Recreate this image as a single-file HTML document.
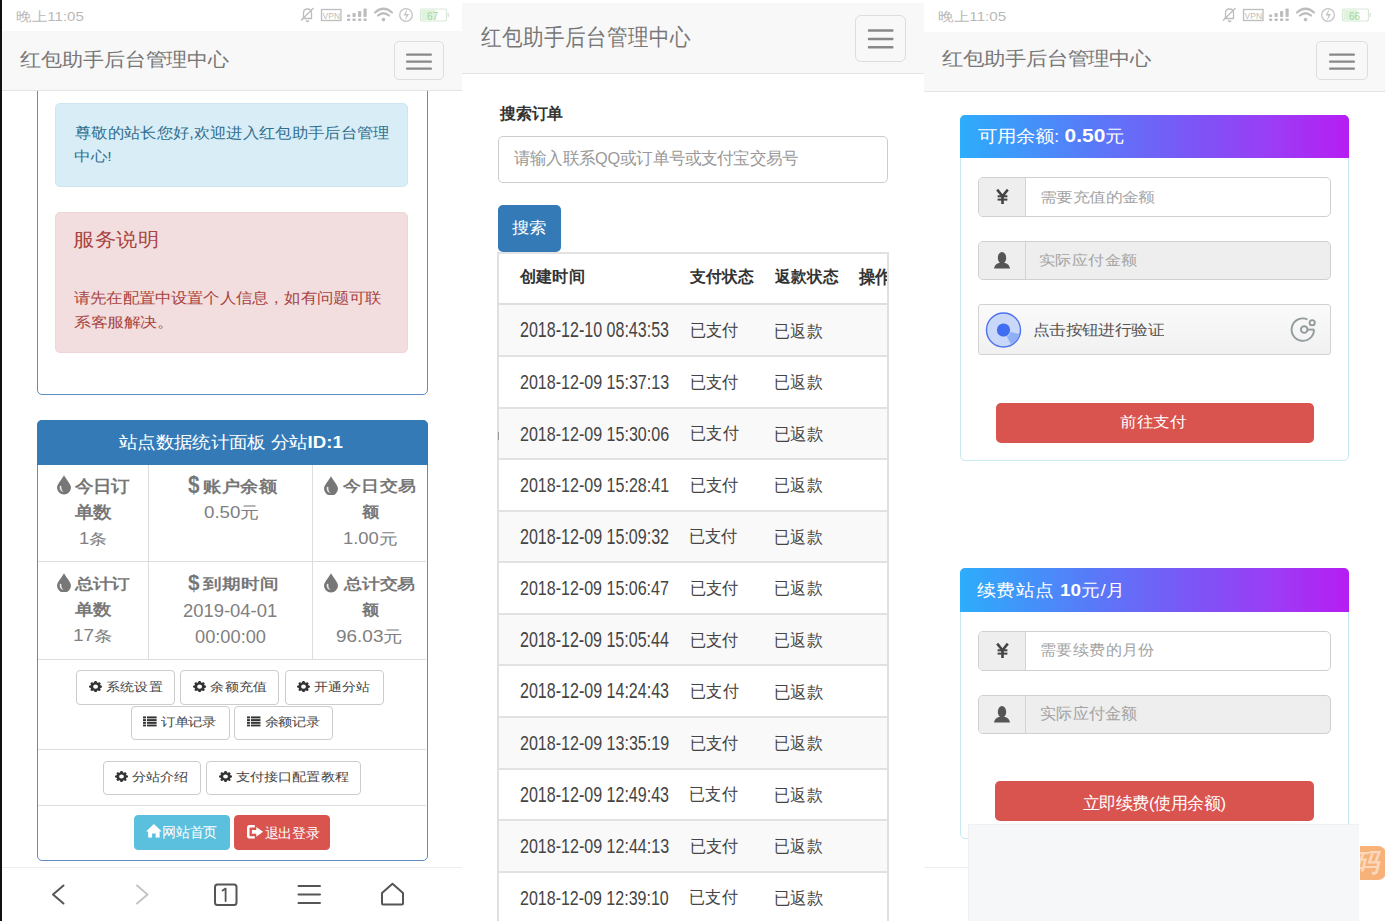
<!DOCTYPE html>
<html><head><meta charset="utf-8">
<style>
*{box-sizing:border-box;margin:0;padding:0}
html,body{width:1385px;height:921px;overflow:hidden;background:#fff;font-family:"Liberation Sans",sans-serif}
.p{position:absolute;top:0;height:921px;overflow:hidden;background:#fff}
.a{position:absolute}
.t{position:absolute;white-space:nowrap;line-height:1}
.nav{position:absolute;left:0;width:100%;background:#f8f8f8;border-bottom:1px solid #e4e4e4}
.tog{position:absolute;border:1px solid #ddd;border-radius:5px}
.bar{position:absolute;height:2.3px;background:#888;border-radius:1px}
.btn{position:absolute;border:1px solid #ccc;border-radius:4px;background:#fff}
</style></head><body>
<div class="p" id="L" style="left:0;width:462px">
<div class="a" style="left:0;top:0;width:1.5px;height:921px;background:#111"></div>
<div class="a" style="left:36.5px;top:60px;width:391px;height:335px;border:1.5px solid #5f8cc2;border-radius:5px"></div>
<div class="a" style="left:55px;top:103px;width:353px;height:84px;background:#d9edf7;border:1px solid #cfe6f2;border-radius:5px"></div>
<div class="t" id="L_info1" style="left:74.50px;top:125.90px;font-size:16.50px;color:#31708f;font-weight:normal;transform:scale(0.9604,0.8811);transform-origin:0 0;">尊敬的站长您好,欢迎进入红包助手后台管理</div>
<div class="t" id="L_info2" style="left:74.10px;top:149.40px;font-size:16.50px;color:#31708f;font-weight:normal;transform:scale(0.9790,0.8236);transform-origin:0 0;">中心!</div>
<div class="a" style="left:55px;top:212px;width:353px;height:141px;background:#f2dede;border:1px solid #eed5d8;border-radius:5px"></div>
<div class="t" id="L_dT" style="left:73.30px;top:230.30px;font-size:20.80px;color:#a94442;font-weight:normal;transform:scale(1.0262,0.9200);transform-origin:0 0;">服务说明</div>
<div class="t" id="L_d1" style="left:74.00px;top:290.40px;font-size:16.30px;color:#a94442;font-weight:normal;transform:scale(1.0115,0.9242);transform-origin:0 0;">请先在配置中设置个人信息，如有问题可联</div>
<div class="t" id="L_d2" style="left:74.00px;top:314.90px;font-size:16.30px;color:#a94442;font-weight:normal;transform:scale(1.0314,0.8460);transform-origin:0 0;">系客服解决。</div>
<div class="a" style="left:1.5px;top:0;width:461px;height:31px;background:#fff"></div>
<div class="t" id="L_sb" style="left:15.60px;top:10.10px;font-size:14.50px;color:#b9b9b9;font-weight:normal;transform:scale(1.0411,0.8760);transform-origin:0 0;">晚上11:05</div>
<svg class="a" style="left:290px;top:0" width="165" height="31" viewBox="290 0 165 31">
  <g fill="none" stroke="#bdbdbd" stroke-width="1.3">
    <path d="M303.5 18.5 V13 Q303.5 9 307.5 9 Q311.5 9 311.5 13 V18.5 H302 M301 20.5 L313.5 8"/>
    <path d="M306 20.5 Q307.5 22.5 309 20.5"/>
    <rect x="321.5" y="9.5" width="19.5" height="11" />
  </g>
  <text x="322.6" y="18.6" font-size="9" fill="#bdbdbd" style="font-family:'Liberation Sans',sans-serif" textLength="17.5" lengthAdjust="spacingAndGlyphs">VPN</text>
  <g fill="#bdbdbd">
    <rect x="347" y="14.5" width="3.2" height="2.6" rx=".8"/><rect x="352.5" y="13" width="3.2" height="4" rx=".8"/><rect x="358" y="11" width="3.2" height="6" rx=".8"/><rect x="363.5" y="8.5" width="3.2" height="8.6" rx=".8"/>
    <rect x="347" y="18.5" width="3.2" height="2.6" rx=".8"/><rect x="352.5" y="18.5" width="3.2" height="2.6" rx=".8"/><rect x="358" y="18.5" width="3.2" height="2.6" rx=".8"/><rect x="363.5" y="18.5" width="3.2" height="2.6" rx=".8"/>
  </g>
  <g fill="none" stroke="#bdbdbd" stroke-width="2.2" stroke-linecap="round">
    <path d="M375 12.5 Q383.5 5 392 12.5"/><path d="M378 15.5 Q383.5 11 389 15.5"/>
  </g>
  <circle cx="383.5" cy="19.6" r="1.8" fill="#bdbdbd"/>
  <circle cx="406" cy="15" r="6.3" fill="none" stroke="#c4c4c4" stroke-width="1.3"/>
  <path d="M407.5 8.5 L403.5 15.5 H406.5 L404.5 21.5 L409 14 H406 Z" fill="#c4c4c4"/>
  <rect x="420.5" y="9" width="26" height="12" rx="2" fill="none" stroke="#d7e9d7" stroke-width="1.2"/>
  <rect x="421.5" y="10" width="14" height="10" fill="#dff3df"/>
  <rect x="447.5" y="13" width="1.5" height="4" fill="#e3e3e3"/>
  <text x="427" y="19.5" font-size="10" fill="#9fd69f" style="font-family:'Liberation Sans',sans-serif">67</text>
</svg>
<div class="nav" style="top:31px;height:60px;left:1.5px"></div>
<div class="t" id="L_title" style="left:19.55px;top:49.75px;font-size:21.00px;color:#777;font-weight:normal;transform:scale(0.9965,0.8975);transform-origin:0 0;">红包助手后台管理中心</div>
<div class="tog" style="left:394px;top:41px;width:50px;height:39px"></div>
<svg class="a" style="left:0;top:0" width="462" height="100"><rect x="406" y="53.6" width="26" height="2.2" rx="1" fill="#888"/></svg>
<svg class="a" style="left:0;top:0" width="462" height="100"><rect x="406" y="60.6" width="26" height="2.2" rx="1" fill="#888"/></svg>
<svg class="a" style="left:0;top:0" width="462" height="100"><rect x="406" y="67.6" width="26" height="2.2" rx="1" fill="#888"/></svg>
<div class="a" style="left:36.5px;top:420px;width:391px;height:441px;border:1.5px solid #5f8cc2;border-radius:5px"></div><div class="a" style="left:36.5px;top:420px;width:391px;height:45px;background:#337ab7;border-radius:5px 5px 0 0"></div>
<div class="t" id="L_sh" style="left:119.10px;top:433.90px;font-size:18.30px;color:#fff;font-weight:normal;transform:scale(1.0188,0.9300);transform-origin:0 0;">站点数据统计面板 分站<b>ID:1</b></div>
<div class="a" style="left:38px;top:561px;width:388px;height:1px;background:#ddd"></div>
<div class="a" style="left:38px;top:659px;width:388px;height:1px;background:#ddd"></div>
<div class="a" style="left:38px;top:749px;width:388px;height:1px;background:#ddd"></div>
<div class="a" style="left:38px;top:804.5px;width:388px;height:1px;background:#ddd"></div>
<div class="a" style="left:148px;top:465px;width:1px;height:195px;background:#ddd"></div>
<div class="a" style="left:312px;top:465px;width:1px;height:195px;background:#ddd"></div>
<svg class="a" style="left:57px;top:475.3px" width="14" height="19.5" viewBox="0 0 14 19.5"><path d="M7 0 C6.2 2.8 0 8.8 0 12.6 A7 6.9 0 0 0 14 12.6 C14 8.8 7.8 2.8 7 0Z" fill="#777"/><path d="M2.9 10.8 C2.2 14 3.6 16.6 6.8 17.2 C4.8 15.6 4.1 13.6 4.4 11 Z" fill="#fff" opacity=".85"/></svg>
<svg class="a" style="left:324.4px;top:475.5px" width="14" height="19.5" viewBox="0 0 14 19.5"><path d="M7 0 C6.2 2.8 0 8.8 0 12.6 A7 6.9 0 0 0 14 12.6 C14 8.8 7.8 2.8 7 0Z" fill="#777"/><path d="M2.9 10.8 C2.2 14 3.6 16.6 6.8 17.2 C4.8 15.6 4.1 13.6 4.4 11 Z" fill="#fff" opacity=".85"/></svg>
<svg class="a" style="left:56.5px;top:572.8px" width="14" height="19.5" viewBox="0 0 14 19.5"><path d="M7 0 C6.2 2.8 0 8.8 0 12.6 A7 6.9 0 0 0 14 12.6 C14 8.8 7.8 2.8 7 0Z" fill="#777"/><path d="M2.9 10.8 C2.2 14 3.6 16.6 6.8 17.2 C4.8 15.6 4.1 13.6 4.4 11 Z" fill="#fff" opacity=".85"/></svg>
<svg class="a" style="left:324.4px;top:573.2px" width="14" height="19.5" viewBox="0 0 14 19.5"><path d="M7 0 C6.2 2.8 0 8.8 0 12.6 A7 6.9 0 0 0 14 12.6 C14 8.8 7.8 2.8 7 0Z" fill="#777"/><path d="M2.9 10.8 C2.2 14 3.6 16.6 6.8 17.2 C4.8 15.6 4.1 13.6 4.4 11 Z" fill="#fff" opacity=".85"/></svg>
<div class="t" id="L_c11" style="left:74.70px;top:477.60px;font-size:18.00px;color:#777;font-weight:bold;transform:scale(1.0117,0.9300);transform-origin:0 0;">今日订</div>
<div class="t" id="L_c12" style="left:74.70px;top:504.20px;font-size:18.00px;color:#777;font-weight:bold;transform:scale(1.0182,0.9300);transform-origin:0 0;">单数</div>
<div class="t" id="L_c13" style="left:78.80px;top:531.10px;font-size:18.00px;color:#808080;font-weight:normal;transform:scale(1.0229,0.8510);transform-origin:0 0;"><span style="display:inline-block;transform:scaleY(1.1);transform-origin:50% 80%">1</span>条</div>
<div class="t" id="L_c21u" style="left:187.55px;top:472.70px;font-size:18.00px;color:#777;font-weight:bold;transform:scale(1.1516,1.3633);transform-origin:0 0;">$</div>
<div class="t" id="L_c21" style="left:203.20px;top:478.00px;font-size:18.00px;color:#777;font-weight:bold;transform:scale(1.0296,0.9065);transform-origin:0 0;">账户余额</div>
<div class="t" id="L_c22" style="left:203.50px;top:505.40px;font-size:18.00px;color:#808080;font-weight:normal;transform:scale(1.0408,0.8777);transform-origin:0 0;"><span style="display:inline-block;transform:scaleY(1.1);transform-origin:50% 80%">0.50</span>元</div>
<div class="t" id="L_c31" style="left:342.60px;top:478.30px;font-size:18.00px;color:#777;font-weight:bold;transform:scale(1.0209,0.8549);transform-origin:0 0;">今日交易</div>
<div class="t" id="L_c32" style="left:361.55px;top:504.30px;font-size:18.00px;color:#777;font-weight:bold;transform:scale(0.9842,0.8568);transform-origin:0 0;">额</div>
<div class="t" id="L_c33" style="left:342.70px;top:531.70px;font-size:18.00px;color:#808080;font-weight:normal;transform:scale(1.0219,0.8176);transform-origin:0 0;"><span style="display:inline-block;transform:scaleY(1.1);transform-origin:50% 80%">1.00</span>元</div>
<div class="t" id="L_c41" style="left:75.30px;top:576.90px;font-size:18.00px;color:#777;font-weight:bold;transform:scale(1.0088,0.8139);transform-origin:0 0;">总计订</div>
<div class="t" id="L_c42" style="left:74.55px;top:601.85px;font-size:18.00px;color:#777;font-weight:bold;transform:scale(0.9925,0.8642);transform-origin:0 0;">单数</div>
<div class="t" id="L_c43" style="left:72.60px;top:627.95px;font-size:18.00px;color:#808080;font-weight:normal;transform:scale(1.0560,0.8604);transform-origin:0 0;"><span style="display:inline-block;transform:scaleY(1.1);transform-origin:50% 80%">17</span>条</div>
<div class="t" id="L_c51u" style="left:187.60px;top:571.70px;font-size:18.00px;color:#777;font-weight:bold;transform:scale(1.1564,1.1785);transform-origin:0 0;">$</div>
<div class="t" id="L_c51" style="left:203.30px;top:576.30px;font-size:18.00px;color:#777;font-weight:bold;transform:scale(1.0485,0.8479);transform-origin:0 0;">到期时间</div>
<div class="t" id="L_c52" style="left:183.20px;top:600.50px;font-size:18.00px;color:#808080;font-weight:normal;transform:scale(1.0233,1.0699);transform-origin:0 0;">2019-04-01</div>
<div class="t" id="L_c53" style="left:195.40px;top:627.15px;font-size:18.00px;color:#808080;font-weight:normal;transform:scale(1.0134,1.0388);transform-origin:0 0;">00:00:00</div>
<div class="t" id="L_c61" style="left:343.50px;top:576.70px;font-size:18.00px;color:#777;font-weight:bold;transform:scale(0.9896,0.8237);transform-origin:0 0;">总计交易</div>
<div class="t" id="L_c62" style="left:361.55px;top:601.95px;font-size:18.00px;color:#777;font-weight:bold;transform:scale(0.9616,0.8477);transform-origin:0 0;">额</div>
<div class="t" id="L_c63" style="left:336.40px;top:628.50px;font-size:18.00px;color:#808080;font-weight:normal;transform:scale(1.0539,0.8714);transform-origin:0 0;"><span style="display:inline-block;transform:scaleY(1.1);transform-origin:50% 80%">96.03</span>元</div>
<div class="btn" style="left:75.5px;top:670px;width:99.0px;height:34.5px;"></div><div class="t" id="L_b1" style="left:88.55px;top:680.75px;font-size:14.00px;color:#444;font-weight:normal;transform:scale(1.0093,0.8654);transform-origin:0 0;"><svg viewBox="0 0 13 13" style="width:0.93em;height:0.93em;vertical-align:-0.07em;margin-right:0.29em"><path fill-rule="evenodd" fill="#333" d="M12.95,5.66 L12.95,7.34 L10.98,8.24 L10.89,8.44 L11.65,10.46 L10.46,11.65 L8.44,10.89 L8.24,10.98 L7.34,12.95 L5.66,12.95 L4.76,10.98 L4.56,10.89 L2.54,11.65 L1.35,10.46 L2.11,8.44 L2.02,8.24 L0.05,7.34 L0.05,5.66 L2.02,4.76 L2.11,4.56 L1.35,2.54 L2.54,1.35 L4.56,2.11 L4.76,2.02 L5.66,0.05 L7.34,0.05 L8.24,2.02 L8.44,2.11 L10.46,1.35 L11.65,2.54 L10.89,4.56 L10.98,4.76 Z M6.5 4.1 A2.4 2.4 0 1 0 6.5 8.9 A2.4 2.4 0 1 0 6.5 4.1Z"/></svg>系统设置</div>
<div class="btn" style="left:180px;top:670px;width:98.5px;height:34.5px;"></div><div class="t" id="L_b2" style="left:192.55px;top:680.75px;font-size:14.00px;color:#444;font-weight:normal;transform:scale(1.0143,0.8654);transform-origin:0 0;"><svg viewBox="0 0 13 13" style="width:0.93em;height:0.93em;vertical-align:-0.07em;margin-right:0.29em"><path fill-rule="evenodd" fill="#333" d="M12.95,5.66 L12.95,7.34 L10.98,8.24 L10.89,8.44 L11.65,10.46 L10.46,11.65 L8.44,10.89 L8.24,10.98 L7.34,12.95 L5.66,12.95 L4.76,10.98 L4.56,10.89 L2.54,11.65 L1.35,10.46 L2.11,8.44 L2.02,8.24 L0.05,7.34 L0.05,5.66 L2.02,4.76 L2.11,4.56 L1.35,2.54 L2.54,1.35 L4.56,2.11 L4.76,2.02 L5.66,0.05 L7.34,0.05 L8.24,2.02 L8.44,2.11 L10.46,1.35 L11.65,2.54 L10.89,4.56 L10.98,4.76 Z M6.5 4.1 A2.4 2.4 0 1 0 6.5 8.9 A2.4 2.4 0 1 0 6.5 4.1Z"/></svg>余额充值</div>
<div class="btn" style="left:284.5px;top:670px;width:99.0px;height:34.5px;"></div><div class="t" id="L_b3" style="left:297.40px;top:680.75px;font-size:14.00px;color:#444;font-weight:normal;transform:scale(1.0032,0.8654);transform-origin:0 0;"><svg viewBox="0 0 13 13" style="width:0.93em;height:0.93em;vertical-align:-0.07em;margin-right:0.29em"><path fill-rule="evenodd" fill="#333" d="M12.95,5.66 L12.95,7.34 L10.98,8.24 L10.89,8.44 L11.65,10.46 L10.46,11.65 L8.44,10.89 L8.24,10.98 L7.34,12.95 L5.66,12.95 L4.76,10.98 L4.56,10.89 L2.54,11.65 L1.35,10.46 L2.11,8.44 L2.02,8.24 L0.05,7.34 L0.05,5.66 L2.02,4.76 L2.11,4.56 L1.35,2.54 L2.54,1.35 L4.56,2.11 L4.76,2.02 L5.66,0.05 L7.34,0.05 L8.24,2.02 L8.44,2.11 L10.46,1.35 L11.65,2.54 L10.89,4.56 L10.98,4.76 Z M6.5 4.1 A2.4 2.4 0 1 0 6.5 8.9 A2.4 2.4 0 1 0 6.5 4.1Z"/></svg>开通分站</div>
<div class="btn" style="left:130.5px;top:705.5px;width:99.0px;height:34.0px;"></div><div class="t" id="L_b4" style="left:142.80px;top:715.70px;font-size:14.00px;color:#444;font-weight:normal;transform:scale(0.9856,0.8230);transform-origin:0 0;"><svg viewBox="0 0 14 13" style="width:1em;height:0.93em;vertical-align:-0.07em;margin-right:0.29em"><g fill="#333"><rect x="0" y="0.5" width="3" height="2.4"/><rect x="4" y="0.5" width="10" height="2.4"/><rect x="0" y="3.8" width="3" height="2.4"/><rect x="4" y="3.8" width="10" height="2.4"/><rect x="0" y="7.1" width="3" height="2.4"/><rect x="4" y="7.1" width="10" height="2.4"/><rect x="0" y="10.4" width="3" height="2.4"/><rect x="4" y="10.4" width="10" height="2.4"/></g></svg>订单记录</div>
<div class="btn" style="left:234px;top:705.5px;width:99px;height:34.0px;"></div><div class="t" id="L_b5" style="left:247.30px;top:715.60px;font-size:14.00px;color:#444;font-weight:normal;transform:scale(0.9775,0.8230);transform-origin:0 0;"><svg viewBox="0 0 14 13" style="width:1em;height:0.93em;vertical-align:-0.07em;margin-right:0.29em"><g fill="#333"><rect x="0" y="0.5" width="3" height="2.4"/><rect x="4" y="0.5" width="10" height="2.4"/><rect x="0" y="3.8" width="3" height="2.4"/><rect x="4" y="3.8" width="10" height="2.4"/><rect x="0" y="7.1" width="3" height="2.4"/><rect x="4" y="7.1" width="10" height="2.4"/><rect x="0" y="10.4" width="3" height="2.4"/><rect x="4" y="10.4" width="10" height="2.4"/></g></svg>余额记录</div>
<div class="btn" style="left:102.5px;top:760.5px;width:98.5px;height:34.5px;"></div><div class="t" id="L_b6" style="left:115.20px;top:771.10px;font-size:14.00px;color:#444;font-weight:normal;transform:scale(1.0011,0.8474);transform-origin:0 0;"><svg viewBox="0 0 13 13" style="width:0.93em;height:0.93em;vertical-align:-0.07em;margin-right:0.29em"><path fill-rule="evenodd" fill="#333" d="M12.95,5.66 L12.95,7.34 L10.98,8.24 L10.89,8.44 L11.65,10.46 L10.46,11.65 L8.44,10.89 L8.24,10.98 L7.34,12.95 L5.66,12.95 L4.76,10.98 L4.56,10.89 L2.54,11.65 L1.35,10.46 L2.11,8.44 L2.02,8.24 L0.05,7.34 L0.05,5.66 L2.02,4.76 L2.11,4.56 L1.35,2.54 L2.54,1.35 L4.56,2.11 L4.76,2.02 L5.66,0.05 L7.34,0.05 L8.24,2.02 L8.44,2.11 L10.46,1.35 L11.65,2.54 L10.89,4.56 L10.98,4.76 Z M6.5 4.1 A2.4 2.4 0 1 0 6.5 8.9 A2.4 2.4 0 1 0 6.5 4.1Z"/></svg>分站介绍</div>
<div class="btn" style="left:206px;top:760.5px;width:155px;height:34.5px;"></div><div class="t" id="L_b7" style="left:219.15px;top:771.20px;font-size:14.00px;color:#444;font-weight:normal;transform:scale(1.0049,0.8509);transform-origin:0 0;"><svg viewBox="0 0 13 13" style="width:0.93em;height:0.93em;vertical-align:-0.07em;margin-right:0.29em"><path fill-rule="evenodd" fill="#333" d="M12.95,5.66 L12.95,7.34 L10.98,8.24 L10.89,8.44 L11.65,10.46 L10.46,11.65 L8.44,10.89 L8.24,10.98 L7.34,12.95 L5.66,12.95 L4.76,10.98 L4.56,10.89 L2.54,11.65 L1.35,10.46 L2.11,8.44 L2.02,8.24 L0.05,7.34 L0.05,5.66 L2.02,4.76 L2.11,4.56 L1.35,2.54 L2.54,1.35 L4.56,2.11 L4.76,2.02 L5.66,0.05 L7.34,0.05 L8.24,2.02 L8.44,2.11 L10.46,1.35 L11.65,2.54 L10.89,4.56 L10.98,4.76 Z M6.5 4.1 A2.4 2.4 0 1 0 6.5 8.9 A2.4 2.4 0 1 0 6.5 4.1Z"/></svg>支付接口配置教程</div>
<div class="btn" style="left:133.5px;top:815px;width:96.0px;height:35px;background:#5bc0de;border-color:#5bc0de;"></div><div class="t" id="L_b8" style="left:145.50px;top:824.30px;font-size:14.00px;color:#fff;font-weight:normal;transform:scale(0.9898,0.9897);transform-origin:0 0;"><svg viewBox="0 0 16 14" style="width:1.14em;height:1em;vertical-align:-0.07em"><path fill="#fff" d="M8 0 L0 7.5 H2.2 V14 H6.2 V9.5 H9.8 V14 H13.8 V7.5 H16 Z"/></svg>网站首页</div>
<div class="btn" style="left:233.5px;top:815px;width:96.0px;height:35px;background:#d9534f;border-color:#d9534f;"></div><div class="t" id="L_b9" style="left:246.60px;top:824.80px;font-size:14.00px;color:#fff;font-weight:normal;transform:scale(0.9799,0.9818);transform-origin:0 0;"><svg viewBox="0 0 17 14" style="width:1.21em;height:1em;vertical-align:-0.07em;margin-right:0.07em"><path fill="#fff" fill-rule="evenodd" d="M3 0 H8 V2.6 H3.2 Q2.6 2.6 2.6 3.2 V10.8 Q2.6 11.4 3.2 11.4 H8 V14 H3 Q0 14 0 11 V3 Q0 0 3 0Z M9.5 2 L16.5 7 L9.5 12 V9 H5 V5 H9.5Z"/></svg>退出登录</div>
<div class="a" style="left:1.5px;top:867px;width:461px;height:1px;background:#eee"></div>
<svg class="a" style="left:0;top:870px" width="462" height="51" viewBox="0 870 462 51">
  <g fill="none" stroke-width="2" stroke-linecap="round" stroke-linejoin="round">
    <path d="M63.5 885.5 L53 894.5 L63.5 903.5" stroke="#555"/>
    <path d="M137 885.5 L147.5 894.5 L137 903.5" stroke="#c4c4c4"/>
    <rect x="215" y="884.5" width="21.5" height="20.5" rx="2.5" stroke="#555"/>
    <path d="M298.5 886 H320 M298.5 894.5 H320 M298.5 903 H320" stroke="#555"/>
    <path d="M382 893 L392.5 883.8 L403 893 V903.5 Q403 904.5 402 904.5 H383 Q382 904.5 382 903.5 Z" stroke="#555"/>
  </g>
  <path d="M222.6 890.6 L225.6 888.6 V901" fill="none" stroke="#555" stroke-width="1.8" stroke-linecap="round" stroke-linejoin="round"/>
</svg>
</div>
<div class="p" id="M" style="left:462px;width:462px">
<div class="a" style="left:0;top:3px;width:462px;height:71px;background:#f8f8f8;border-bottom:1.5px solid #e4e4e4"></div>
<div class="t" id="M_title" style="left:19.00px;top:24.60px;font-size:21.00px;color:#777;font-weight:normal;transform:scale(0.9977,1.1166);transform-origin:0 0;">红包助手后台管理中心</div>
<div class="tog" style="left:393px;top:15px;width:51px;height:47px;border-radius:6px"></div>
<svg class="a" style="left:0;top:0" width="462" height="100"><rect x="405.8" y="29.3" width="25.7" height="2.5" rx="1" fill="#888"/></svg>
<svg class="a" style="left:0;top:0" width="462" height="100"><rect x="405.8" y="37.7" width="25.7" height="2.5" rx="1" fill="#888"/></svg>
<svg class="a" style="left:0;top:0" width="462" height="100"><rect x="405.8" y="46.1" width="25.7" height="2.5" rx="1" fill="#888"/></svg>
<div class="t" id="M_search" style="left:37.60px;top:106.30px;font-size:16.00px;color:#333;font-weight:bold;transform:scale(0.9895,0.9958);transform-origin:0 0;">搜索订单</div>
<div class="a" style="left:36px;top:136.3px;width:390px;height:47px;border:1.3px solid #ccc;border-radius:5px"></div>
<div class="t" id="M_ph" style="left:51.70px;top:149.50px;font-size:16.10px;color:#999;font-weight:normal;transform:scale(1.0111,1.0319);transform-origin:0 0;">请输入联系QQ或订单号或支付宝交易号</div>
<div class="a" style="left:36px;top:204.7px;width:63px;height:47px;background:#337ab7;border-radius:5px"></div>
<div class="t" id="M_btn" style="left:49.60px;top:219.80px;font-size:16.20px;color:#fff;font-weight:normal;transform:scale(1.0472,0.9600);transform-origin:0 0;">搜索</div>
<div class="a" style="left:35px;top:252px;width:392px;height:2px;background:#e2e2e2"></div>
<div class="a" style="left:35px;top:252px;width:2px;height:680px;background:#e0e0e0"></div>
<div class="a" style="left:36.5px;top:303px;width:389px;height:3px;background:#dedede"></div>
<div class="t" id="M_h0" style="left:58.10px;top:268.00px;font-size:16.10px;color:#333;font-weight:bold;transform:scale(1.0145,1.0062);transform-origin:0 0;">创建时间</div>
<div class="t" id="M_h1" style="left:228.20px;top:268.40px;font-size:16.10px;color:#333;font-weight:bold;transform:scale(1.0053,1.0204);transform-origin:0 0;">支付状态</div>
<div class="t" id="M_h2" style="left:313.00px;top:268.00px;font-size:16.10px;color:#333;font-weight:bold;transform:scale(0.9953,1.0226);transform-origin:0 0;">返款状态</div>
<div class="t" id="M_h3" style="left:397.00px;top:268.00px;font-size:16.10px;color:#333;font-weight:bold;transform:scale(1.0000,1.1000);transform-origin:0 0;">操作</div>
<div class="a" style="left:426px;top:252px;width:36px;height:60px;background:#fff"></div>
<div class="a" style="left:425px;top:252px;width:2px;height:680px;background:#e0e0e0"></div>
<div class="a" style="left:37px;top:305px;width:388px;height:51px;background:#f9f9f9"></div>
<div class="t" id="M_d0" style="left:57.60px;top:319.40px;font-size:16.20px;color:#444;font-weight:normal;transform:scale(0.9914,1.3108);transform-origin:0 0;">2018-12-10 08:43:53</div>
<div class="t" id="M_p0" style="left:227.70px;top:322.40px;font-size:15.80px;color:#444;font-weight:normal;transform:scale(1.0111,1.0610);transform-origin:0 0;">已支付</div>
<div class="t" id="M_r0" style="left:312.10px;top:322.60px;font-size:15.80px;color:#444;font-weight:normal;transform:scale(1.0225,1.0938);transform-origin:0 0;">已返款</div>
<div class="a" style="left:37px;top:355px;width:388px;height:2px;background:#e2e2e2"></div>
<div class="t" id="M_d1" style="left:57.70px;top:371.03px;font-size:16.20px;color:#444;font-weight:normal;transform:scale(0.9921,1.2924);transform-origin:0 0;">2018-12-09 15:37:13</div>
<div class="t" id="M_p1" style="left:227.70px;top:373.89px;font-size:15.80px;color:#444;font-weight:normal;transform:scale(1.0120,1.0610);transform-origin:0 0;">已支付</div>
<div class="t" id="M_r1" style="left:312.10px;top:373.95px;font-size:15.80px;color:#444;font-weight:normal;transform:scale(1.0225,1.0938);transform-origin:0 0;">已返款</div>
<div class="a" style="left:37px;top:409px;width:388px;height:50px;background:#f9f9f9"></div>
<div class="a" style="left:37px;top:407px;width:388px;height:2px;background:#e2e2e2"></div>
<div class="t" id="M_d2" style="left:57.70px;top:422.67px;font-size:16.20px;color:#444;font-weight:normal;transform:scale(0.9921,1.2924);transform-origin:0 0;">2018-12-09 15:30:06</div>
<div class="t" id="M_p2" style="left:227.50px;top:425.30px;font-size:15.80px;color:#444;font-weight:normal;transform:scale(1.0214,1.0824);transform-origin:0 0;">已支付</div>
<div class="t" id="M_r2" style="left:312.10px;top:426.11px;font-size:15.80px;color:#444;font-weight:normal;transform:scale(1.0302,1.0618);transform-origin:0 0;">已返款</div>
<div class="a" style="left:37px;top:458px;width:388px;height:2px;background:#e2e2e2"></div>
<div class="t" id="M_d3" style="left:57.70px;top:474.31px;font-size:16.20px;color:#444;font-weight:normal;transform:scale(0.9921,1.2924);transform-origin:0 0;">2018-12-09 15:28:41</div>
<div class="t" id="M_p3" style="left:227.70px;top:477.37px;font-size:15.80px;color:#444;font-weight:normal;transform:scale(1.0120,1.0610);transform-origin:0 0;">已支付</div>
<div class="t" id="M_r3" style="left:312.10px;top:477.15px;font-size:15.80px;color:#444;font-weight:normal;transform:scale(1.0225,1.0938);transform-origin:0 0;">已返款</div>
<div class="a" style="left:37px;top:512px;width:388px;height:50px;background:#f9f9f9"></div>
<div class="a" style="left:37px;top:510px;width:388px;height:2px;background:#e2e2e2"></div>
<div class="t" id="M_d4" style="left:57.60px;top:525.58px;font-size:16.20px;color:#444;font-weight:normal;transform:scale(0.9914,1.3108);transform-origin:0 0;">2018-12-09 15:09:32</div>
<div class="t" id="M_p4" style="left:227.30px;top:528.34px;font-size:15.80px;color:#444;font-weight:normal;transform:scale(1.0108,1.0601);transform-origin:0 0;">已支付</div>
<div class="t" id="M_r4" style="left:312.10px;top:528.50px;font-size:15.80px;color:#444;font-weight:normal;transform:scale(1.0225,1.0938);transform-origin:0 0;">已返款</div>
<div class="a" style="left:37px;top:561px;width:388px;height:2px;background:#e2e2e2"></div>
<div class="t" id="M_d5" style="left:57.50px;top:577.42px;font-size:16.20px;color:#444;font-weight:normal;transform:scale(0.9907,1.2846);transform-origin:0 0;">2018-12-09 15:06:47</div>
<div class="t" id="M_p5" style="left:227.70px;top:580.25px;font-size:15.80px;color:#444;font-weight:normal;transform:scale(1.0120,1.0610);transform-origin:0 0;">已支付</div>
<div class="t" id="M_r5" style="left:312.10px;top:580.25px;font-size:15.80px;color:#444;font-weight:normal;transform:scale(1.0225,1.0938);transform-origin:0 0;">已返款</div>
<div class="a" style="left:37px;top:615px;width:388px;height:50px;background:#f9f9f9"></div>
<div class="a" style="left:37px;top:613px;width:388px;height:2px;background:#e2e2e2"></div>
<div class="t" id="M_d6" style="left:57.80px;top:628.50px;font-size:16.20px;color:#444;font-weight:normal;transform:scale(0.9901,1.3187);transform-origin:0 0;">2018-12-09 15:05:44</div>
<div class="t" id="M_p6" style="left:227.70px;top:631.74px;font-size:15.80px;color:#444;font-weight:normal;transform:scale(1.0111,1.0610);transform-origin:0 0;">已支付</div>
<div class="t" id="M_r6" style="left:312.10px;top:631.60px;font-size:15.80px;color:#444;font-weight:normal;transform:scale(1.0225,1.0938);transform-origin:0 0;">已返款</div>
<div class="a" style="left:37px;top:664px;width:388px;height:2px;background:#e2e2e2"></div>
<div class="t" id="M_d7" style="left:57.60px;top:680.24px;font-size:16.20px;color:#444;font-weight:normal;transform:scale(0.9914,1.3108);transform-origin:0 0;">2018-12-09 14:24:43</div>
<div class="t" id="M_p7" style="left:227.50px;top:683.45px;font-size:15.80px;color:#444;font-weight:normal;transform:scale(1.0223,1.0824);transform-origin:0 0;">已支付</div>
<div class="t" id="M_r7" style="left:312.10px;top:684.03px;font-size:15.80px;color:#444;font-weight:normal;transform:scale(1.0302,1.0618);transform-origin:0 0;">已返款</div>
<div class="a" style="left:37px;top:718px;width:388px;height:51px;background:#f9f9f9"></div>
<div class="a" style="left:37px;top:716px;width:388px;height:2px;background:#e2e2e2"></div>
<div class="t" id="M_d8" style="left:57.70px;top:731.88px;font-size:16.20px;color:#444;font-weight:normal;transform:scale(0.9921,1.2924);transform-origin:0 0;">2018-12-09 13:35:19</div>
<div class="t" id="M_p8" style="left:227.70px;top:734.72px;font-size:15.80px;color:#444;font-weight:normal;transform:scale(1.0111,1.0610);transform-origin:0 0;">已支付</div>
<div class="t" id="M_r8" style="left:312.10px;top:734.80px;font-size:15.80px;color:#444;font-weight:normal;transform:scale(1.0225,1.0938);transform-origin:0 0;">已返款</div>
<div class="a" style="left:37px;top:768px;width:388px;height:2px;background:#e2e2e2"></div>
<div class="t" id="M_d9" style="left:57.60px;top:783.58px;font-size:16.20px;color:#444;font-weight:normal;transform:scale(0.9914,1.3108);transform-origin:0 0;">2018-12-09 12:49:43</div>
<div class="t" id="M_p9" style="left:227.40px;top:786.44px;font-size:15.80px;color:#444;font-weight:normal;transform:scale(1.0227,1.0833);transform-origin:0 0;">已支付</div>
<div class="t" id="M_r9" style="left:312.10px;top:786.65px;font-size:15.80px;color:#444;font-weight:normal;transform:scale(1.0225,1.0938);transform-origin:0 0;">已返款</div>
<div class="a" style="left:37px;top:821px;width:388px;height:51px;background:#f9f9f9"></div>
<div class="a" style="left:37px;top:819px;width:388px;height:2px;background:#e2e2e2"></div>
<div class="t" id="M_d10" style="left:57.70px;top:835.15px;font-size:16.20px;color:#444;font-weight:normal;transform:scale(0.9921,1.2924);transform-origin:0 0;">2018-12-09 12:44:13</div>
<div class="t" id="M_p10" style="left:227.70px;top:838.20px;font-size:15.80px;color:#444;font-weight:normal;transform:scale(1.0111,1.0610);transform-origin:0 0;">已支付</div>
<div class="t" id="M_r10" style="left:312.10px;top:838.05px;font-size:15.80px;color:#444;font-weight:normal;transform:scale(1.0215,1.1041);transform-origin:0 0;">已返款</div>
<div class="a" style="left:37px;top:871px;width:388px;height:2px;background:#e2e2e2"></div>
<div class="t" id="M_d11" style="left:57.70px;top:886.78px;font-size:16.20px;color:#444;font-weight:normal;transform:scale(0.9894,1.2924);transform-origin:0 0;">2018-12-09 12:39:10</div>
<div class="t" id="M_p11" style="left:227.40px;top:889.36px;font-size:15.80px;color:#444;font-weight:normal;transform:scale(1.0227,1.0833);transform-origin:0 0;">已支付</div>
<div class="t" id="M_r11" style="left:312.10px;top:889.86px;font-size:15.80px;color:#444;font-weight:normal;transform:scale(1.0302,1.0618);transform-origin:0 0;">已返款</div>
<div class="a" style="left:36px;top:432px;width:1.3px;height:8px;background:#999"></div>
</div>
<div class="p" id="R" style="left:924px;width:461px">
<div class="t" id="R_sb" style="left:14.10px;top:10.10px;font-size:14.50px;color:#b9b9b9;font-weight:normal;transform:scale(1.0458,0.8760);transform-origin:0 0;">晚上11:05</div>
<svg class="a" style="left:288px;top:0" width="165" height="31" viewBox="290 0 165 31">
  <g fill="none" stroke="#bdbdbd" stroke-width="1.3">
    <path d="M303.5 18.5 V13 Q303.5 9 307.5 9 Q311.5 9 311.5 13 V18.5 H302 M301 20.5 L313.5 8"/>
    <path d="M306 20.5 Q307.5 22.5 309 20.5"/>
    <rect x="321.5" y="9.5" width="19.5" height="11" />
  </g>
  <text x="322.6" y="18.6" font-size="9" fill="#bdbdbd" style="font-family:'Liberation Sans',sans-serif" textLength="17.5" lengthAdjust="spacingAndGlyphs">VPN</text>
  <g fill="#bdbdbd">
    <rect x="347" y="14.5" width="3.2" height="2.6" rx=".8"/><rect x="352.5" y="13" width="3.2" height="4" rx=".8"/><rect x="358" y="11" width="3.2" height="6" rx=".8"/><rect x="363.5" y="8.5" width="3.2" height="8.6" rx=".8"/>
    <rect x="347" y="18.5" width="3.2" height="2.6" rx=".8"/><rect x="352.5" y="18.5" width="3.2" height="2.6" rx=".8"/><rect x="358" y="18.5" width="3.2" height="2.6" rx=".8"/><rect x="363.5" y="18.5" width="3.2" height="2.6" rx=".8"/>
  </g>
  <g fill="none" stroke="#bdbdbd" stroke-width="2.2" stroke-linecap="round">
    <path d="M375 12.5 Q383.5 5 392 12.5"/><path d="M378 15.5 Q383.5 11 389 15.5"/>
  </g>
  <circle cx="383.5" cy="19.6" r="1.8" fill="#bdbdbd"/>
  <circle cx="406" cy="15" r="6.3" fill="none" stroke="#c4c4c4" stroke-width="1.3"/>
  <path d="M407.5 8.5 L403.5 15.5 H406.5 L404.5 21.5 L409 14 H406 Z" fill="#c4c4c4"/>
  <rect x="420.5" y="9" width="26" height="12" rx="2" fill="none" stroke="#d7e9d7" stroke-width="1.2"/>
  <rect x="421.5" y="10" width="14" height="10" fill="#dff3df"/>
  <rect x="447.5" y="13" width="1.5" height="4" fill="#e3e3e3"/>
  <text x="427" y="19.5" font-size="10" fill="#9fd69f" style="font-family:'Liberation Sans',sans-serif">66</text>
</svg>
<div class="nav" style="top:31.5px;height:60px"></div>
<div class="t" id="R_title" style="left:18.45px;top:49.45px;font-size:21.00px;color:#777;font-weight:normal;transform:scale(0.9961,0.8855);transform-origin:0 0;">红包助手后台管理中心</div>
<div class="tog" style="left:392px;top:41px;width:51.5px;height:39px"></div>
<svg class="a" style="left:0;top:0" width="462" height="100"><rect x="405" y="53.6" width="26" height="2.2" rx="1" fill="#888"/></svg>
<svg class="a" style="left:0;top:0" width="462" height="100"><rect x="405" y="60.6" width="26" height="2.2" rx="1" fill="#888"/></svg>
<svg class="a" style="left:0;top:0" width="462" height="100"><rect x="405" y="67.6" width="26" height="2.2" rx="1" fill="#888"/></svg>
<div class="a" style="left:35.5px;top:114.8px;width:389.5px;height:346.7px;border:1px solid #c6e9f0;border-radius:5px"></div><div class="a" style="left:35.5px;top:114.8px;width:389.5px;height:43.39999999999999px;border-radius:5px 5px 0 0;background:linear-gradient(90deg,#2cadfb 0%,#5a78f8 35%,#7c55f6 60%,#9b3df5 80%,#b61df3 100%)"></div>
<div class="t" id="R_c1h" style="left:54.10px;top:126.85px;font-size:17.00px;color:#fff;font-weight:normal;transform:scale(1.1181,0.9776);transform-origin:0 0;">可用余额: <b style="font-size:1.1em">0.50</b>元</div>
<div class="a" style="left:54px;top:177.2px;width:353px;height:39.400000000000006px;border:1.2px solid #cfcfcf;border-radius:5px;background:#fff;overflow:hidden"><div class="a" style="left:0;top:0;width:47px;height:100%;background:#eee;border-right:1.2px solid #d3d3d3"></div></div>
<div class="a" style="left:54px;top:177.2px;width:48px;height:39.400000000000006px;display:flex;align-items:center;justify-content:center"><svg width="13" height="15" viewBox="0 0 13 15" style="margin-top:-1px"><g fill="none" stroke="#444" stroke-width="2.6" stroke-linecap="butt"><path d="M1.2 0.6 L6.5 7.2 L11.8 0.6"/></g><rect x="1.6" y="6.3" width="9.8" height="2" fill="#444"/><rect x="1.6" y="9.6" width="9.8" height="2" fill="#444"/><rect x="5.2" y="6.5" width="2.6" height="8.5" fill="#444"/></svg></div>
<div class="t" id="R_i1" style="left:116.10px;top:190.70px;font-size:16.00px;color:#a3a3a3;font-weight:normal;transform:scale(1.0240,0.8494);transform-origin:0 0;">需要充值的金额</div>
<div class="a" style="left:54px;top:241.2px;width:353px;height:38.80000000000001px;border:1.2px solid #cfcfcf;border-radius:5px;background:#eee;overflow:hidden"><div class="a" style="left:0;top:0;width:47px;height:100%;background:#eee;border-right:1.2px solid #d3d3d3"></div></div>
<div class="a" style="left:54px;top:241.2px;width:48px;height:38.80000000000001px;display:flex;align-items:center;justify-content:center"><svg width="18" height="17" viewBox="0 0 18 17"><ellipse cx="9" cy="5.9" rx="4.2" ry="5.9" fill="#555"/><path d="M1 16.6 Q1.6 12.4 5.9 11 L12.1 11 Q16.4 12.4 17 16.6 Z" fill="#555"/></svg></div>
<div class="t" id="R_i2" style="left:115.40px;top:253.10px;font-size:16.00px;color:#a3a3a3;font-weight:normal;transform:scale(1.0280,0.8914);transform-origin:0 0;">实际应付金额</div>
<div class="a" style="left:54px;top:304.3px;width:353px;height:51px;border:1.2px solid #d2d2d2;border-radius:3px;background:linear-gradient(180deg,#fafafa,#f1f1f1)"></div>
<svg class="a" style="left:60px;top:311px" width="38" height="38" viewBox="0 0 38 38">
 <circle cx="19.5" cy="19" r="17" fill="#c9d7f8" stroke="#4f73f0" stroke-width="1.4"/>
 <path d="M19.5 19 L35.2 23 A16.3 16.3 0 0 1 27 33.5 Z" fill="#8eaef6"/>
 <circle cx="19.5" cy="19" r="7.5" fill="#c9d7f8"/>
 <circle cx="19.5" cy="19" r="6.6" fill="#3f6ef3"/>
</svg>
<div class="t" id="R_cap" style="left:108.80px;top:321.50px;font-size:16.20px;color:#555;font-weight:normal;transform:scale(1.0224,0.9110);transform-origin:0 0;">点击按钮进行验证</div>
<svg class="a" style="left:364px;top:314px" width="30" height="30" viewBox="0 0 30 30">
 <g fill="none" stroke="#939b9d" stroke-width="1.9">
  <path d="M26 15.6 A11.2 11.2 0 1 1 19.5 5.5"/>
  <circle cx="16.2" cy="15.6" r="3.3"/>
  <path d="M19.5 15.6 H26"/>
  <circle cx="24.2" cy="8.7" r="2.6"/>
 </g>
</svg>
<div class="a" style="left:71.5px;top:402.5px;width:318px;height:40px;background:#d9534f;border-radius:5px"></div>
<div class="t" id="R_pay" style="left:196.30px;top:413.60px;font-size:16.20px;color:#fff;font-weight:normal;transform:scale(1.0453,0.9390);transform-origin:0 0;">前往支付</div>
<div class="a" style="left:35.5px;top:568.3px;width:389.5px;height:270.70000000000005px;border:1px solid #c6e9f0;border-radius:5px"></div><div class="a" style="left:35.5px;top:568.3px;width:389.5px;height:43.700000000000045px;border-radius:5px 5px 0 0;background:linear-gradient(90deg,#2cadfb 0%,#5a78f8 35%,#7c55f6 60%,#9b3df5 80%,#b61df3 100%)"></div>
<div class="t" id="R_c2h" style="left:53.30px;top:582.40px;font-size:17.50px;color:#fff;font-weight:normal;transform:scale(1.0810,0.9824);transform-origin:0 0;">续费站点 <b>10</b>元/月</div>
<div class="a" style="left:54px;top:631.3px;width:353px;height:39.40000000000009px;border:1.2px solid #cfcfcf;border-radius:5px;background:#fff;overflow:hidden"><div class="a" style="left:0;top:0;width:47px;height:100%;background:#eee;border-right:1.2px solid #d3d3d3"></div></div>
<div class="a" style="left:54px;top:631.3px;width:48px;height:39.40000000000009px;display:flex;align-items:center;justify-content:center"><svg width="13" height="15" viewBox="0 0 13 15" style="margin-top:-1px"><g fill="none" stroke="#444" stroke-width="2.6" stroke-linecap="butt"><path d="M1.2 0.6 L6.5 7.2 L11.8 0.6"/></g><rect x="1.6" y="6.3" width="9.8" height="2" fill="#444"/><rect x="1.6" y="9.6" width="9.8" height="2" fill="#444"/><rect x="5.2" y="6.5" width="2.6" height="8.5" fill="#444"/></svg></div>
<div class="t" id="R_i3" style="left:115.65px;top:642.50px;font-size:16.00px;color:#a3a3a3;font-weight:normal;transform:scale(1.0250,0.9603);transform-origin:0 0;">需要续费的月份</div>
<div class="a" style="left:54px;top:694.5px;width:353px;height:39.299999999999955px;border:1.2px solid #cfcfcf;border-radius:5px;background:#eee;overflow:hidden"><div class="a" style="left:0;top:0;width:47px;height:100%;background:#eee;border-right:1.2px solid #d3d3d3"></div></div>
<div class="a" style="left:54px;top:694.5px;width:48px;height:39.299999999999955px;display:flex;align-items:center;justify-content:center"><svg width="18" height="17" viewBox="0 0 18 17"><ellipse cx="9" cy="5.9" rx="4.2" ry="5.9" fill="#555"/><path d="M1 16.6 Q1.6 12.4 5.9 11 L12.1 11 Q16.4 12.4 17 16.6 Z" fill="#555"/></svg></div>
<div class="t" id="R_i4" style="left:115.60px;top:706.00px;font-size:16.00px;color:#a3a3a3;font-weight:normal;transform:scale(1.0183,1.0147);transform-origin:0 0;">实际应付金额</div>
<div class="a" style="left:71px;top:781.3px;width:319px;height:40px;background:#d9534f;border-radius:5px"></div>
<div class="t" id="R_renew" style="left:159.30px;top:794.70px;font-size:16.20px;color:#fff;font-weight:normal;transform:scale(1.0303,1.0267);transform-origin:0 0;">立即续费(使用余额)</div>
<div class="a" style="left:0;top:867px;width:44px;height:1px;background:#eee"></div>
<div class="a" style="left:43.5px;top:823.5px;width:391.5px;height:98px;background:#f6f7f9;border-left:1px solid #eef0f2;border-top:1px solid #eef0f2"></div>
<div class="a" style="left:435.6px;top:846px;width:26px;height:34px;background:#f7b27a;border-radius:0 8px 8px 0;overflow:hidden"><div class="t" style="left:-6px;top:4px;font-size:25px;color:#fbd8bb;font-style:italic;font-weight:bold">码</div></div>
</div>
</body></html>
